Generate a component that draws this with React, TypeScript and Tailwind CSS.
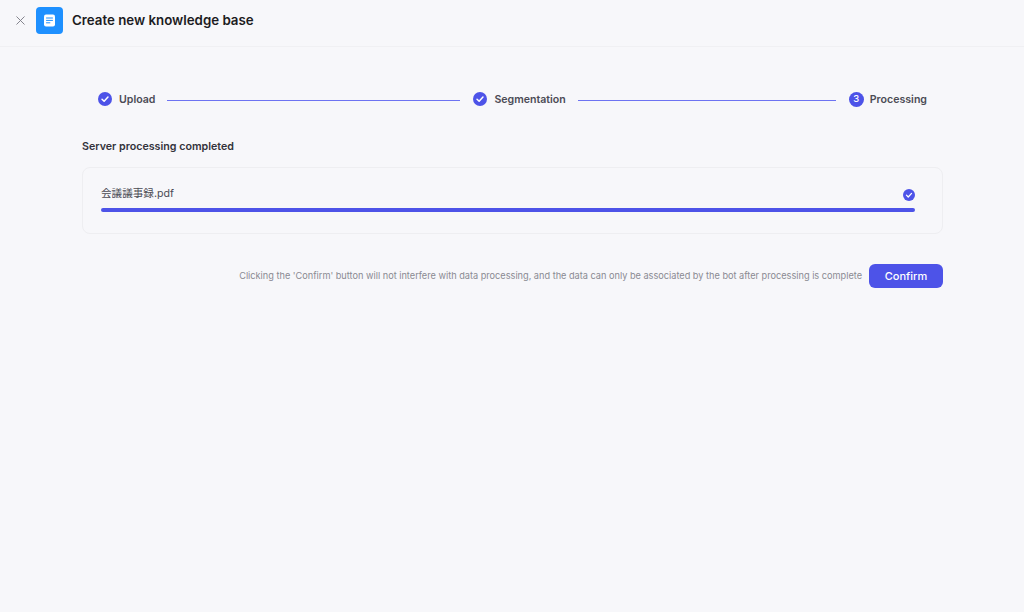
import React from 'react';
import { X } from 'lucide-react';

const CheckCircle = ({ size }: { size: number }) => (
  <svg width={size} height={size} viewBox="0 0 16 16" className="shrink-0">
    <circle cx="8" cy="8" r="8" fill="#4d53e8" />
    <path d="M4.6 8.2l2.4 2.4 4.4-4.8" fill="none" stroke="#fff" strokeWidth="1.7" strokeLinecap="round" strokeLinejoin="round" />
  </svg>
);

const Step = ({ label, num }: { label: string; num?: number }) => (
  <div className={num ? 'flex items-center gap-[6px] shrink-0' : 'flex items-center gap-[7px] shrink-0'}>
    {num ? (
      <div className="flex h-[15px] w-[15px] items-center justify-center rounded-full bg-[#4d53e8] text-[9.5px] font-medium text-white">
        {num}
      </div>
    ) : (
      <CheckCircle size={14} />
    )}
    <span className="h-[16px] text-[10.6px] leading-[18px] font-semibold text-[#4b4b55]">{label}</span>
  </div>
);

export default function App() {
  return (
    <div className="h-[612px] w-[1024px] overflow-hidden bg-[#f7f7fa] font-['Inter','Noto_Sans_CJK_JP',sans-serif]">
      {/* Header */}
      <div className="flex h-[47px] items-center border-b border-[#f0f0f3] pb-[5px] pl-[13px]">
        <X className="h-[15px] w-[15px] text-[#7d7d85]" strokeWidth={1.5} />
        <div className="ml-[8px] flex h-[27px] w-[27px] items-center justify-center rounded-[4px] bg-[#1e90ff]">
          <svg width="13" height="13" viewBox="0 0 13 13">
            <rect x="1" y="0.5" width="11" height="12" rx="2" fill="#fff" />
            <path d="M3.5 4h6M3.5 6.4h6M3.5 8.8h3.4" stroke="#1e90ff" strokeWidth="1" strokeLinecap="round" />
          </svg>
        </div>
        <h1 className="ml-[9px] text-[13.3px] font-semibold text-[#1c1c22]">Create new knowledge base</h1>
      </div>

      <div className="pl-[82px] pr-[81px]">
        {/* Steps */}
        <div className="flex items-center gap-[13px] pl-[16px] pr-[16px] pt-[44px]">
          <div className="flex flex-1 items-center gap-[12px]">
            <Step label="Upload" />
            <div className="mt-[3px] h-px flex-1 bg-[#6d73f2]" />
          </div>
          <div className="flex flex-1 items-center gap-[12px]">
            <Step label="Segmentation" />
            <div className="mt-[3px] h-px flex-1 bg-[#6d73f2]" />
          </div>
          <Step label="Processing" num={3} />
        </div>

        <div className="mt-[32px] text-[10.7px] leading-[16px] font-semibold text-[#33333b]">Server processing completed</div>

        {/* File card */}
        <div className="mt-[12px] h-[67px] rounded-[8px] border border-[#eeeef1] pl-[18px] pr-[27px] pt-[17px]">
          <div className="flex items-center justify-between">
            <span className="text-[10.6px] leading-[18px] text-[#4b4b55]">会議議事録.pdf</span>
            <div className="mt-[1px]">
              <CheckCircle size={12} />
            </div>
          </div>
          <div className="mt-[5px] h-[4px] rounded-full bg-[#4d53e8]" />
        </div>

        {/* Footer */}
        <div className="mt-[30px] flex items-center justify-end gap-[7px]">
          <span className="text-[9.18px] text-[#8a8a92]">
            Clicking the 'Confirm' button will not interfere with data processing, and the data can only be associated by the bot after processing is complete
          </span>
          <button className="h-[24px] w-[74px] rounded-[6px] bg-[#4d53e8] text-[11px] font-medium text-white">Confirm</button>
        </div>
      </div>
    </div>
  );
}
